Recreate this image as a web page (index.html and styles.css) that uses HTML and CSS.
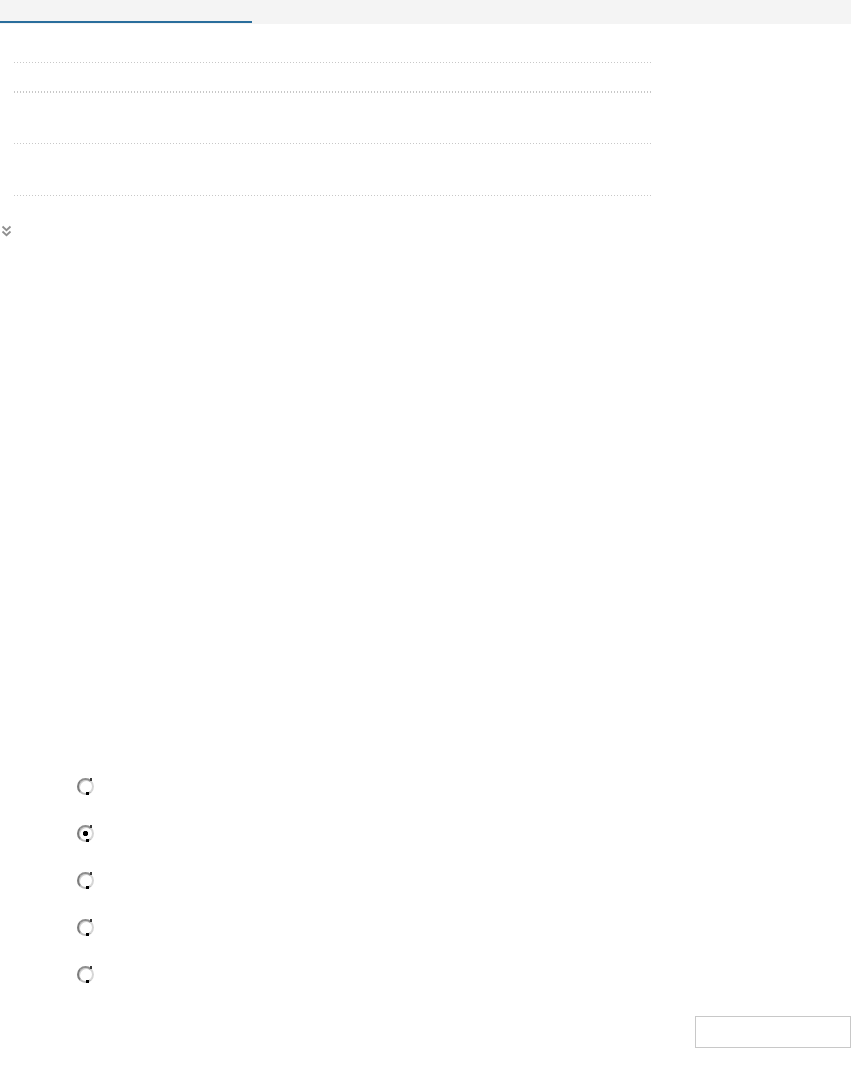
FILE: index.html
```html
<!DOCTYPE html>
<html lang="en">
<head>
<meta charset="utf-8">
<title>Page</title>
<link rel="stylesheet" href="styles.css">
</head>
<body>
<header class="topbar">
  <div class="tab"></div>
</header>
<section class="list">
  <div class="sep"></div>
  <div class="row row-a"></div>
  <div class="sep"></div>
  <div class="sep"></div>
  <div class="row row-b"></div>
  <div class="sep"></div>
  <div class="row row-c"></div>
  <div class="sep"></div>
</section>
<div class="more">
  <svg width="12" height="13" viewBox="0 0 12 13" aria-hidden="true">
    <path d="M1.5 1.5 L5.5 5.2 L9.5 1.5 M1.5 6.5 L5.5 10.2 L9.5 6.5" fill="none" stroke="#8f8f8f" stroke-width="1.8"/>
  </svg>
</div>
<form class="options">
  <label class="opt"><span class="radio"></span></label>
  <label class="opt"><span class="radio checked"></span></label>
  <label class="opt"><span class="radio"></span></label>
  <label class="opt"><span class="radio"></span></label>
  <label class="opt"><span class="radio"></span></label>
</form>
<div class="inputrow">
  <div class="box"></div>
</div>
</body>
</html>
```

FILE: styles.css
```css
html, body {
  margin: 0;
  padding: 0;
  background: #ffffff;
  font-family: "Liberation Sans", Arial, sans-serif;
}

.topbar {
  height: 24px;
  background: #f4f4f4;
}

.tab {
  width: 252px;
  height: 21px;
  border-bottom: 2px solid #2a6e9c;
}

.list {
  margin: 38px 0 0 14px;
  width: 637px;
}

.sep {
  height: 1px;
  background: repeating-linear-gradient(90deg, #c8c8c8 0 1px, transparent 1px 3px);
}

.row-a { height: 28px; }
.row-b { height: 50px; }
.row-c { height: 51px; }

.more {
  margin: 29px 0 0 1px;
  height: 13px;
}

.more svg {
  display: block;
}

.options {
  margin: 540px 0 0 77px;
  display: flex;
  flex-direction: column;
}

.opt {
  display: block;
  height: 47px;
}

.radio {
  position: relative;
  display: block;
  width: 13px;
  height: 13px;
  border-radius: 50%;
  border: 2px solid #9c9c9c;
  border-left-color: #7c7c7c;
  border-top-color: #8e8e8e;
  border-right-color: #d6d6d6;
  border-bottom-color: #bdbdbd;
  background: #ffffff;
  box-shadow: inset 1px 1px 0 #d0d0d0;
}

.radio::before {
  content: "";
  position: absolute;
  right: 0;
  top: -2px;
  width: 2px;
  height: 3px;
  background: #3a3a3a;
}

.radio::after {
  content: "";
  position: absolute;
  left: 7px;
  bottom: -2px;
  width: 3px;
  height: 3px;
  background: #000;
}

.radio.checked {
  background: radial-gradient(circle at 50% 50%, #000 0 2.3px, #fff 3px);
}

.inputrow {
  display: flex;
  justify-content: flex-end;
  margin-top: 3px;
}

.box {
  width: 154px;
  height: 30px;
  border: 1px solid #c8c8c8;
  background: #fff;
}
```
